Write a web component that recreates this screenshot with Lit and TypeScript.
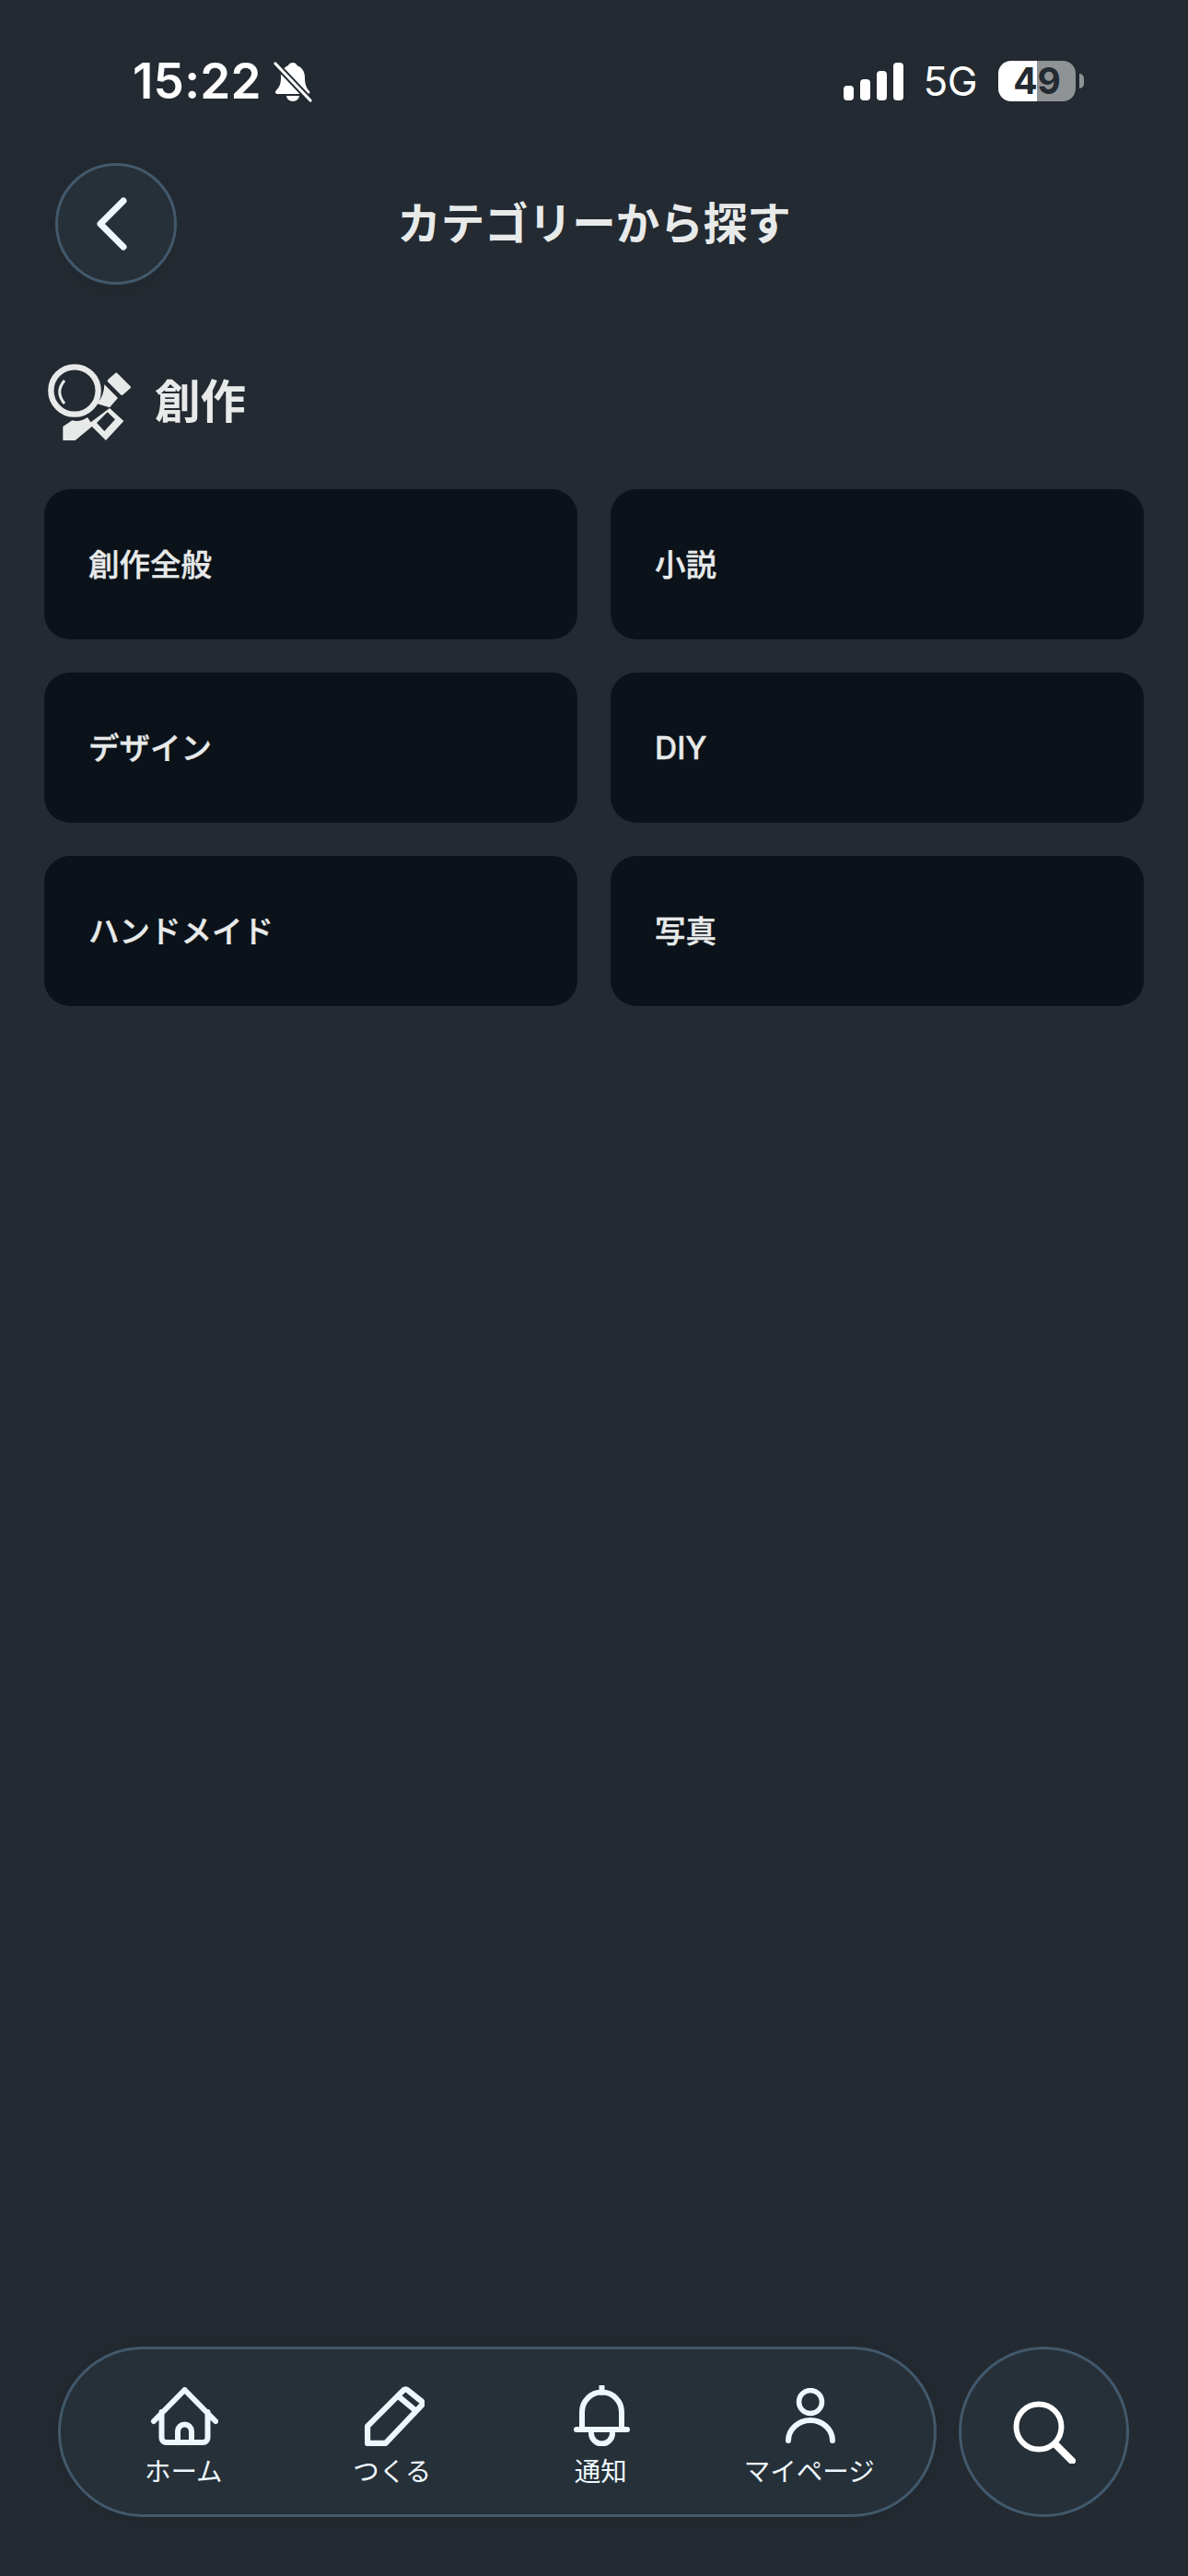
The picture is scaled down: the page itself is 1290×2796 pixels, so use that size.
import { LitElement, html, css, svg } from "lit";
import { customElement } from "lit/decorators.js";

const cats = ["創作全般", "小説", "デザイン", "DIY", "ハンドメイド", "写真"];

const ico = {
  home: svg`<path d="M3.500 37 37 3 70.500 37M12 27V55a5 5 0 0 0 5 5H57a5 5 0 0 0 5-5V27M29.500 60V48a7.500 7.500 0 0 1 15 0V60" fill="none" stroke="currentColor" stroke-width="6" stroke-linecap="round" stroke-linejoin="round"/>`,
  pencil: svg`<path d="M3 42 41 4a3 3 0 0 1 4 0L60 16a3 3 0 0 1 0 4L22 60H3ZM36 11 54 26" fill="none" stroke="currentColor" stroke-width="6" stroke-linejoin="round"/>`,
  bell: svg`<path d="M30.500 1V8M9 48V29a21.500 21.500 0 0 1 43 0V48M3 48H58M19 52a11.500 11.500 0 0 0 23 0" fill="none" stroke="currentColor" stroke-width="6" stroke-linecap="round"/>`,
  person: svg`<circle cx="27" cy="15" r="12.500" fill="none" stroke="currentColor" stroke-width="5.500"/><path d="M3 57A24 22 0 0 1 51 57" fill="none" stroke="currentColor" stroke-width="6" stroke-linecap="round"/>`,
  search: svg`<circle cx="28" cy="28" r="24.500" fill="none" stroke="currentColor" stroke-width="6"/><path d="M46 47 64 65" fill="none" stroke="currentColor" stroke-width="8" stroke-linecap="round"/>`,
};

@customElement("app-root")
export class AppRoot extends LitElement {
  static styles = css`
    :host {
      display: flex;
      flex-direction: column;
      width: 1290px;
      height: 2796px;
      background: #232a31;
      font-family: Inter, "Noto Sans CJK JP", "Noto Sans", sans-serif;
      overflow: hidden;
    }
    .status {
      display: flex;
      align-items: center;
      height: 64px;
      margin-top: 56px;
      padding: 0 122px 0 144px;
      color: #fff;
    }
    .time {
      font: 600 53px/64px Inter, sans-serif;
      letter-spacing: 0.2px;
    }
    .mute { margin-left: 13px; width: 42px; height: 45px; }
    .grow { flex: 1; }
    .signal { width: 65px; height: 41px; margin-right: 21px; }
    .net { font: 400 44px/64px Inter, sans-serif; letter-spacing: -0.5px; margin-right: 23px; }
    .batt {
      position: relative;
      width: 84px;
      height: 44px;
      border-radius: 14px;
      background: linear-gradient(90deg, #fff 50%, #8f9395 50%);
      color: #232a31;
      font: 700 39px/44px Inter, sans-serif;
      text-align: center;
    }
    .batt::after {
      content: "";
      position: absolute;
      left: 88px;
      top: 14px;
      width: 5px;
      height: 16px;
      border-radius: 0 5px 5px 0;
      background: #8f9395;
    }
    .head {
      display: grid;
      grid-template-columns: 1fr auto 1fr;
      align-items: center;
      padding: 0 60px;
      margin-top: 57px;
    }
    .round {
      display: flex;
      align-items: center;
      justify-content: center;
      box-sizing: border-box;
      background: #263038;
      border: 3px solid #42596c;
      border-radius: 50%;
      color: #eef7fe;
    }
    .back {
      width: 132px;
      height: 132px;
      box-shadow: 0 12px 50px rgba(0, 0, 0, 0.06);
    }
    .chev { margin-right: 9px; }
    .title {
      font-size: 47.500px;
      line-height: 70px;
      font-weight: 700;
      color: #e8eaea;
      white-space: nowrap;
    }
    .section {
      display: flex;
      align-items: center;
      gap: 23px;
      padding-left: 45px;
      margin-top: 79px;
      height: 95px;
    }
    .section h2 {
      margin: 0;
      font-size: 49.500px;
      line-height: 70px;
      font-weight: 700;
      color: #e8eaea;
    }
    .grid {
      display: grid;
      grid-template-columns: 1fr 1fr;
      gap: 36px;
      padding: 0 48px;
      margin-top: 48px;
    }
    .card {
      display: flex;
      align-items: center;
      box-sizing: border-box;
      height: 163px;
      padding-left: 48px;
      border-radius: 28px;
      background: #0b1219;
      color: #e8eaea;
      font-size: 33.500px;
      font-weight: 500;
      line-height: 48px;
      -webkit-text-stroke: 0.4px #e8eaea;
    }
    .dock {
      display: flex;
      gap: 24px;
      padding: 0 64px 64px 63px;
    }
    .nav {
      flex: 1;
      display: grid;
      grid-template-columns: repeat(4, 1fr);
      align-items: start;
      box-sizing: border-box;
      height: 185px;
      padding: 38px 21px 0;
      background: #263038;
      border: 3px solid #42596c;
      border-radius: 92px;
      box-shadow: 0 0 40px rgba(0, 0, 0, 0.08);
    }
    .item {
      display: flex;
      flex-direction: column;
      align-items: center;
      color: #eef7fe;
    }
    .ic { height: 68px; display: flex; align-items: center; justify-content: center; }
    .shift { margin-left: 4px; }
    .lab { font-size: 28.500px; line-height: 40px; white-space: nowrap; margin-top: 7px; margin-right: 2px; }
    .search { width: 185px; height: 185px; color: #fff; }
  `;

  render() {
    return html`
      <div class="status">
        <span class="time">15:22</span>
        <svg class="mute" viewBox="0 0 42 45">
          <path d="M21 2c2 0 4 1 4.500 3C31 7 34 12 34 18c0 6 1 11 5 15 1 2 0 3-2 3H5c-3 0-4-2-2-4 4-4 5-8 5-14 0-6 3-11 8-13C16.500 3 19 2 21 2Z" fill="#fff"/>
          <path d="M14 38h14a7 6 0 0 1-14 0Z" fill="#fff"/>
          <path d="M0 1 40 43" stroke="#232a31" stroke-width="7"/>
          <path d="M2 3 40 43" stroke="#fff" stroke-width="3.200" stroke-linecap="round"/>
        </svg>
        <span class="grow"></span>
        <svg class="signal" viewBox="0 0 65 41" fill="#fff">
          <rect x="0" y="25" width="11" height="16" rx="4"/>
          <rect x="18" y="18" width="11" height="23" rx="4"/>
          <rect x="36" y="9" width="11" height="32" rx="4"/>
          <rect x="54" y="0" width="11" height="41" rx="4"/>
        </svg>
        <span class="net">5G</span>
        <div class="batt">49</div>
      </div>

      <div class="head">
        <div class="round back">
          <svg class="chev" width="34" height="58" viewBox="0 0 34 58">
            <path d="M29 4 4 29 29 54" fill="none" stroke="currentColor" stroke-width="7" stroke-linecap="round" stroke-linejoin="round"/>
          </svg>
        </div>
        <div class="title">カテゴリーから探す</div>
        <div></div>
      </div>

      <div class="section">
        <svg width="100" height="95" viewBox="0 0 300 285" fill="#e8eaea">
          <circle cx="108" cy="108" r="77" fill="none" stroke="#e8eaea" stroke-width="19"/>
          <path d="M75 75C54 100 54 125 75 150" fill="none" stroke="#e8eaea" stroke-width="9"/>
          <path d="M220 76 244 55 286 97 262 118Z" stroke="#e8eaea" stroke-width="10" stroke-linejoin="round"/>
          <path d="M205 88 249 132 222 163 180 150Q205 125 205 88Z"/>
          <path d="M70 225 100 205Q125 212 150 195L168 222 110 270H70Z"/>
          <path d="M222 165 268 207 210 270 155 215ZM215 178 180 213 205 240 240 202Z" fill-rule="evenodd"/>
        </svg>
        <h2>創作</h2>
      </div>

      <div class="grid">
        ${cats.map((c) => html`<div class="card">${c}</div>`)}
      </div>

      <div class="grow"></div>

      <div class="dock">
        <div class="nav">
          <div class="item"><div class="ic"><svg width="74" height="63" viewBox="0 0 73 63">${ico.home}</svg></div><div class="lab">ホーム</div></div>
          <div class="item"><div class="ic shift"><svg width="65" height="65" viewBox="0 0 63 63">${ico.pencil}</svg></div><div class="lab">つくる</div></div>
          <div class="item"><div class="ic"><svg width="61" height="66" viewBox="0 0 61 66">${ico.bell}</svg></div><div class="lab">通知</div></div>
          <div class="item"><div class="ic"><svg width="54" height="60" viewBox="0 0 54 60">${ico.person}</svg></div><div class="lab">マイページ</div></div>
        </div>
        <div class="round search">
          <svg width="68" height="68" viewBox="0 0 68 68">${ico.search}</svg>
        </div>
      </div>
    `;
  }
}
